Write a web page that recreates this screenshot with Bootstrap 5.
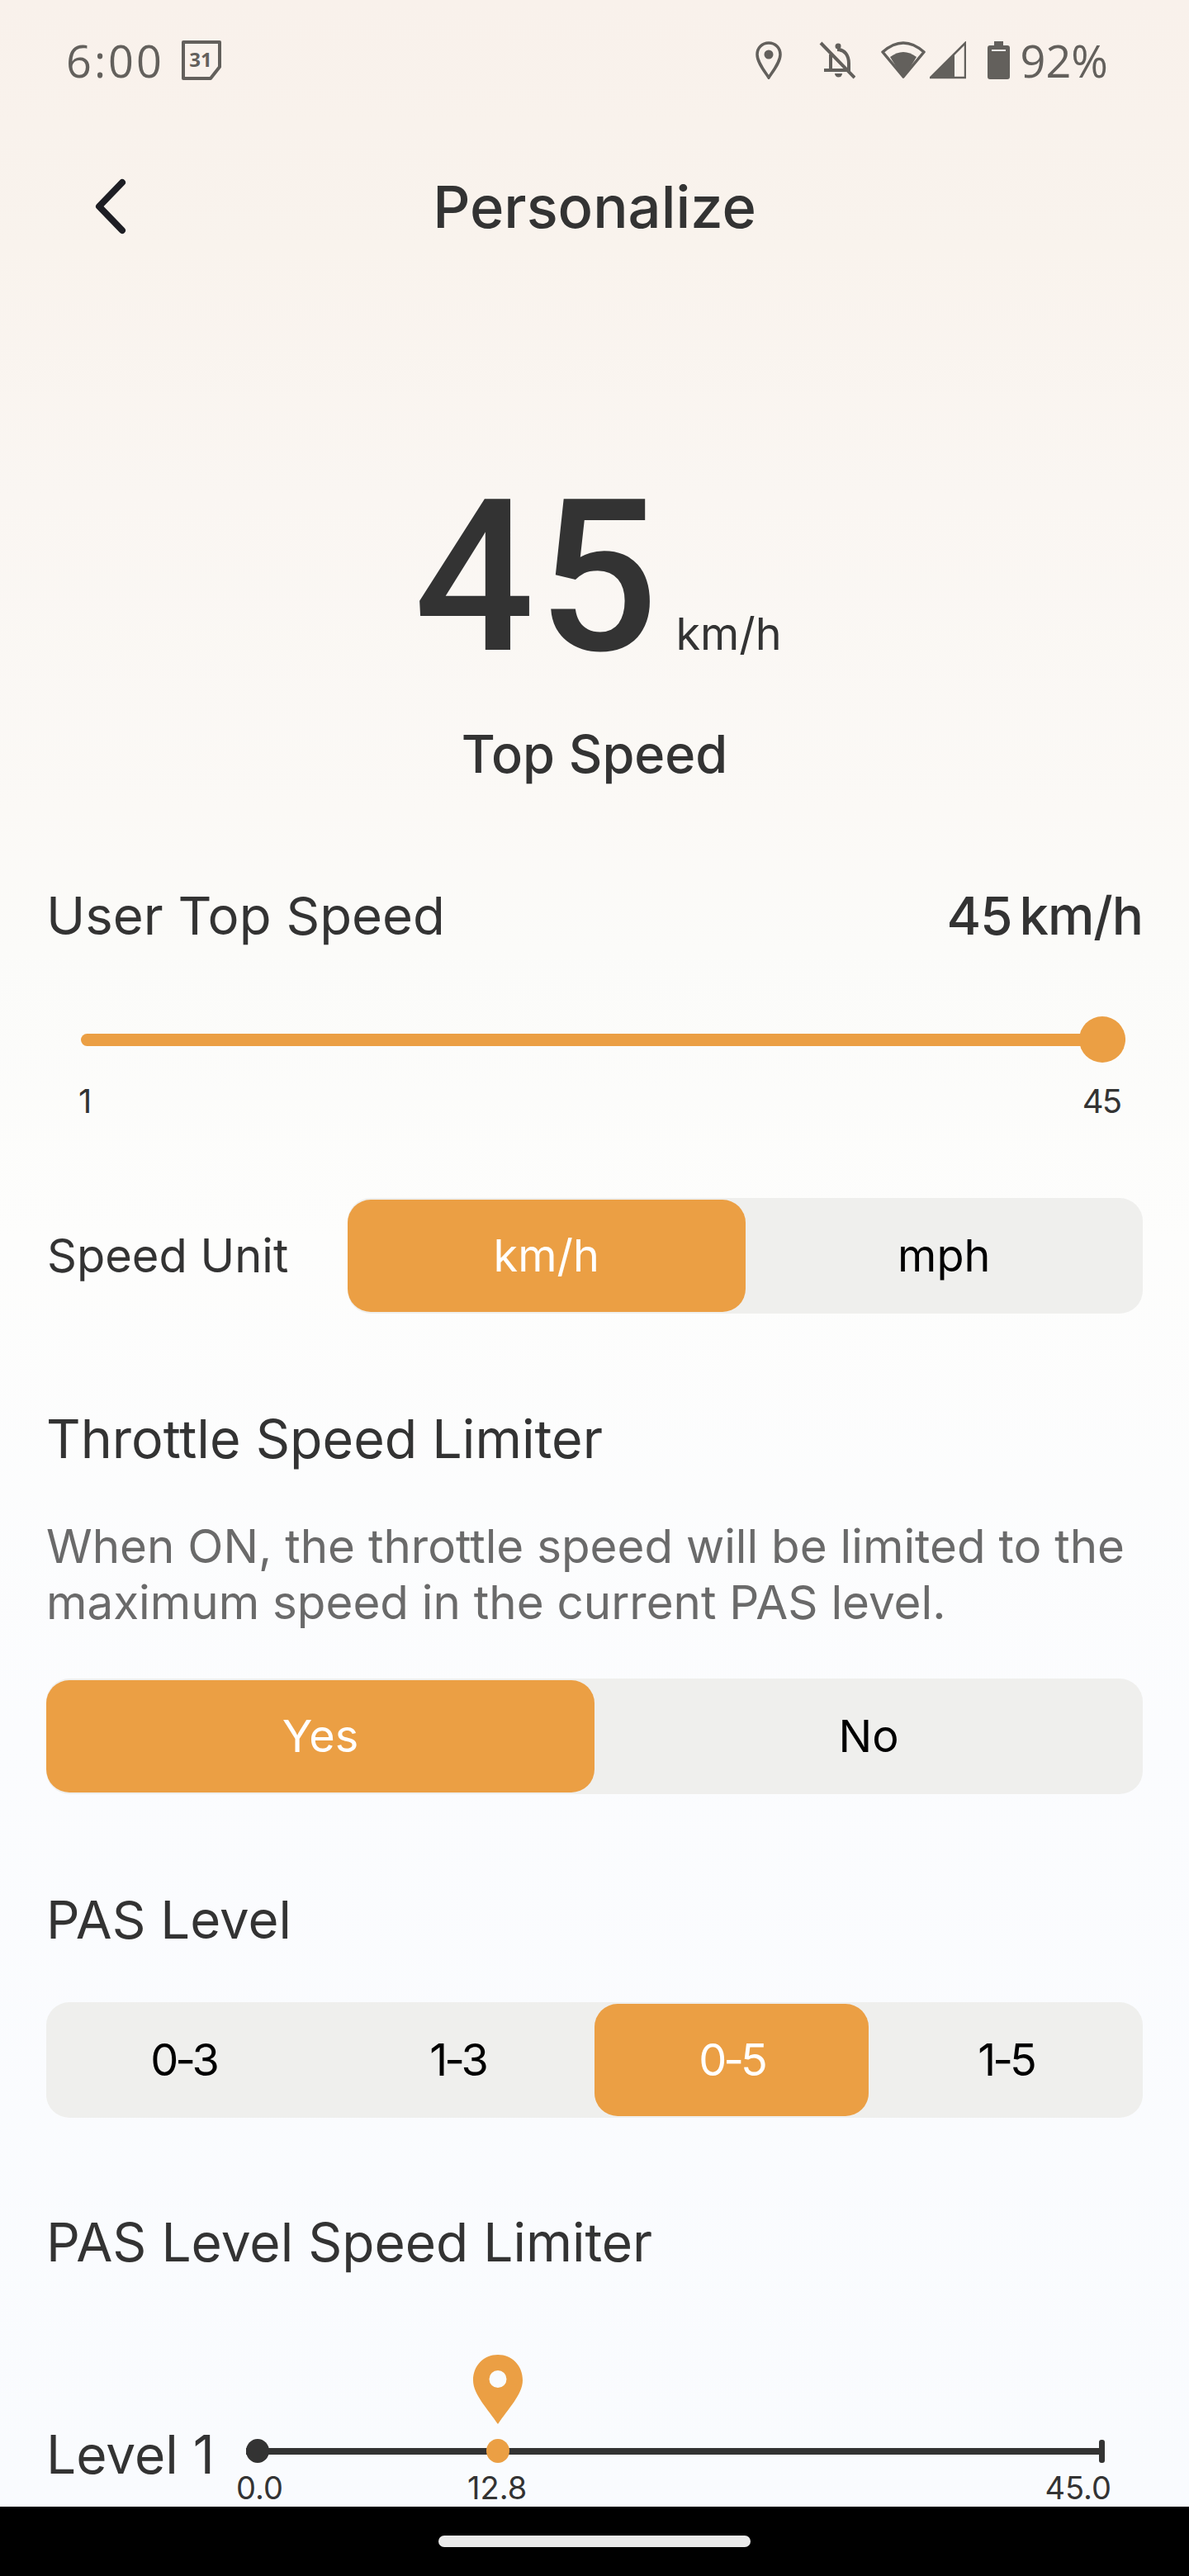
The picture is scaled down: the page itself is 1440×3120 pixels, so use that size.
<!DOCTYPE html>
<html lang="en">
<head>
    <meta charset="UTF-8">
    <meta name="viewport" content="width=device-width, initial-scale=1.0">
    <title>Personalize</title>
    <link rel="stylesheet" href="https://cdn.jsdelivr.net/npm/bootstrap@5.3.0/dist/css/bootstrap.min.css">
    <style>
        html, body { margin: 0; background: #000; }
        .phone { width: 1440px; height: 3120px; overflow: hidden; font-family: Inter, "Liberation Sans", sans-serif; color: #333; }
        .screen { height: 3036px; overflow: hidden; background: linear-gradient(180deg, #f9f1eb 0, #f9f3ed 300px, #faf6f2 600px, #fbf9f6 980px, #fbfbf9 1150px, #fdfdfc 1500px, #fbfcfe 2100px, #f9fbfe 3036px); padding: 0 56px; }
        .status-row { height: 70px; padding-top: 38px; box-sizing: content-box; margin: 0 -56px; padding-left: 80px; padding-right: 98px; color: #63605c; font-family: "Open Sans", Lato, sans-serif; font-size: 54px; line-height: 70px; }
        .clock-text { letter-spacing: 3px; }
        .gap-cal { margin-left: 20px; }
        .gap-bell { margin-left: 45px; }
        .gap-wifi { margin-left: 31px; }
        .gap-signal { margin-left: 5px; }
        .gap-batt { margin-left: 26px; }
        .gap-pct { margin-left: 13px; }
        .top-title { height: 110px; margin-top: 88px; position: relative; }
        .page-name { font-size: 70.5px; font-weight: 500; line-height: 110px; }
        .back-icon { position: absolute; left: 56px; top: 16px; }
        .big-speed { margin-top: 289px; height: 210px; line-height: 210px; padding-left: 8px; font-family: Roboto, Inter, sans-serif; font-size: 257px; font-weight: 500; letter-spacing: 4px; align-items: baseline; }
        .big-unit { font-family: Inter, sans-serif; font-size: 54px; font-weight: 400; letter-spacing: 0; line-height: 1; margin-left: 17px; }
        .speed-caption { font-size: 63px; font-weight: 500; line-height: 78px; margin-top: 69px; }
        .row-title { font-size: 64px; line-height: 76px; }
        .user-row { margin-top: 119px; font-size: 63.5px; }
        .value-pair { font-weight: 500; gap: 9px; letter-spacing: -1px; }
        .slide-wrap { height: 56px; position: relative; margin: 84px 21px 0 42px; display: flex; align-items: center; }
        .slide-track { height: 15px; width: 100%; background: #eb9f44; border-radius: 8px; }
        .slide-thumb { position: absolute; right: 0; top: 0; width: 56px; height: 56px; border-radius: 50%; background: #eb9f44; }
        .slide-ends { font-size: 40px; line-height: 46px; margin: 24px 27px 0 39px; letter-spacing: -2px; }
        .seg-box { background: #efefed; border-radius: 28px; height: 140px; display: flex; }
        .seg-item { flex: 1 1 0; text-align: center; border: 0; background: transparent; color: #000; font-size: 54px; border-radius: 28px; height: 136px; margin-top: 2px; line-height: 136px; padding: 0; }
        .seg-item.on { background: #eb9f44; color: #fff; }
        .seg-tight { letter-spacing: -4px; }
        .unit-row { margin-top: 94px; }
        .unit-label { font-size: 56px; width: 365px; flex: 0 0 auto; padding-left: 1px; }
        .throttle-title { margin-top: 114px; font-size: 64.5px; }
        .note-text { font-size: 56.5px; line-height: 68px; color: #6a6a6a; margin-top: 58px; }
        .throttle-box { margin-top: 58px; }
        .pas-title { margin-top: 114px; font-size: 63.5px; }
        .pas-box { margin-top: 62px; }
        .limit-title { margin-top: 113px; }
        .level-row { margin-top: 98px; }
        .level-name { font-size: 64px; line-height: 76px; width: 242px; flex: 0 0 auto; padding-top: 83px; }
        .level-slide { position: relative; width: 1040px; height: 200px; }
        .level-pin { position: absolute; left: 275px; top: 0; }
        .level-track { height: 8px; background: #333; position: absolute; left: 0; right: 0; top: 113px; }
        .level-dot { position: absolute; width: 28px; height: 29px; border-radius: 50%; top: 102px; left: 0; background: #333; }
        .level-dot.now { left: 291px; background: #eb9f44; }
        .level-end { position: absolute; width: 7px; height: 28px; right: 0; top: 103px; background: #333; border-radius: 3px; }
        .level-num { position: absolute; font-size: 38px; line-height: 46px; top: 138px; }
        .num-min { left: -12px; }
        .num-now { left: 268px; }
        .num-max { right: -8px; }
        .nav-strip { height: 84px; background: #000; display: flex; justify-content: center; align-items: center; }
        .nav-pill { width: 378px; height: 14px; background: #eaeaea; border-radius: 7px; }
    </style>
</head>
<body>
<div class="phone">
    <div class="screen">
        <!-- Status bar -->
        <div class="status-row d-flex align-items-center justify-content-between">
            <div class="d-flex align-items-center">
                <span class="clock-text">6:00</span>
                <svg class="gap-cal" width="50" height="50" viewBox="0 0 50 50"><path d="M3 3H47V33L36 47H3Z" fill="none" stroke="#63605c" stroke-width="4" stroke-linejoin="round"/><text x="24" y="33" text-anchor="middle" font-size="24" font-weight="700" fill="#63605c" font-family="Open Sans">31</text></svg>
            </div>
            <div class="d-flex align-items-center">
                <svg width="32" height="46" viewBox="0 0 32 46"><path d="M16 2C8 2 2 8 2 16 2 25 10 35 16 44 22 35 30 25 30 16 30 8 24 2 16 2Z" fill="none" stroke="#63605c" stroke-width="3.5"/><circle cx="16" cy="16" r="5.5" fill="#63605c"/></svg>
                <svg class="gap-bell" width="44" height="46" viewBox="0 0 44 46"><path d="M6 35H38M14 16V35M22 10C31 10 36 17 36 27V35M2 2L43 44" fill="none" stroke="#63605c" stroke-width="4"/><circle cx="23" cy="6" r="3.5" fill="#63605c"/><path d="M19 39a4.500 4.500 0 0 0 9 0Z" fill="#63605c"/></svg>
                <svg class="gap-wifi" width="54" height="46" viewBox="0 0 54 46"><path d="M27 43L2 13Q27 -9 52 13Z" fill="none" stroke="#63605c" stroke-width="3.5" stroke-linejoin="round"/><path d="M27 45L11 19Q27 7 43 19Z" fill="#63605c"/></svg>
                <svg class="gap-signal" width="44" height="46" viewBox="0 0 44 46"><path d="M1 44L43 2V44Z" fill="none" stroke="#63605c" stroke-width="2.500"/><path d="M1 44L30 15V44Z" fill="#63605c"/></svg>
                <svg class="gap-batt" width="27" height="46" viewBox="0 0 27 46"><path d="M8 0H19V5H24a3 3 0 0 1 3 3V43a3 3 0 0 1-3 3H3a3 3 0 0 1-3-3V8a3 3 0 0 1 3-3H8Z" fill="#63605c"/><rect x="5" y="10" width="17" height="2" fill="#f9f1eb"/></svg>
                <span class="gap-pct">92%</span>
            </div>
        </div>

        <!-- Title -->
        <div class="top-title text-center">
            <svg class="back-icon" width="48" height="76" viewBox="0 0 48 76"><path d="M36 9L8 38 36 67" fill="none" stroke="#1e1e24" stroke-width="8" stroke-linecap="round" stroke-linejoin="round"/></svg>
            <div class="page-name">Personalize</div>
        </div>

        <!-- Top speed readout -->
        <div class="big-speed d-flex justify-content-center">
            <span>45</span><span class="big-unit">km/h</span>
        </div>
        <div class="speed-caption text-center">Top Speed</div>

        <!-- User top speed -->
        <div class="d-flex justify-content-between row-title user-row">
            <span>User Top Speed</span>
            <span class="d-flex value-pair"><span>45</span><span>km/h</span></span>
        </div>
        <div class="slide-wrap">
            <div class="slide-track"></div>
            <div class="slide-thumb"></div>
        </div>
        <div class="slide-ends d-flex justify-content-between"><span>1</span><span>45</span></div>

        <!-- Speed unit -->
        <div class="d-flex align-items-center unit-row">
            <span class="unit-label">Speed Unit</span>
            <div class="seg-box flex-grow-1">
                <button class="seg-item on">km/h</button>
                <button class="seg-item">mph</button>
            </div>
        </div>

        <!-- Throttle speed limiter -->
        <div class="row-title throttle-title">Throttle Speed Limiter</div>
        <div class="note-text">When ON, the throttle speed will be limited to the maximum speed in the current PAS level.</div>
        <div class="seg-box throttle-box">
            <button class="seg-item on">Yes</button>
            <button class="seg-item">No</button>
        </div>

        <!-- PAS level -->
        <div class="row-title pas-title">PAS Level</div>
        <div class="seg-box pas-box">
            <button class="seg-item seg-tight">0-3</button>
            <button class="seg-item seg-tight">1-3</button>
            <button class="seg-item seg-tight on">0-5</button>
            <button class="seg-item seg-tight">1-5</button>
        </div>

        <!-- PAS level speed limiter -->
        <div class="row-title limit-title">PAS Level Speed Limiter</div>
        <div class="d-flex level-row">
            <span class="level-name">Level 1</span>
            <div class="level-slide">
                <svg class="level-pin" width="60" height="84" viewBox="0 0 60 84"><path fill-rule="evenodd" d="M30 0C13 0 0 13 0 31 0 48 18 66 30 84 42 66 60 48 60 31 60 13 47 0 30 0ZM30 19a10.500 10.500 0 1 1 0 21 10.500 10.500 0 1 1 0-21Z" fill="#eb9f44"/></svg>
                <div class="level-track"></div>
                <div class="level-dot"></div>
                <div class="level-dot now"></div>
                <div class="level-end"></div>
                <span class="level-num num-min">0.0</span>
                <span class="level-num num-now">12.8</span>
                <span class="level-num num-max">45.0</span>
            </div>
        </div>
    </div>
    <div class="nav-strip"><div class="nav-pill"></div></div>
</div>
<script src="https://cdn.jsdelivr.net/npm/bootstrap@5.3.0/dist/js/bootstrap.bundle.min.js"></script>
</body>
</html>
